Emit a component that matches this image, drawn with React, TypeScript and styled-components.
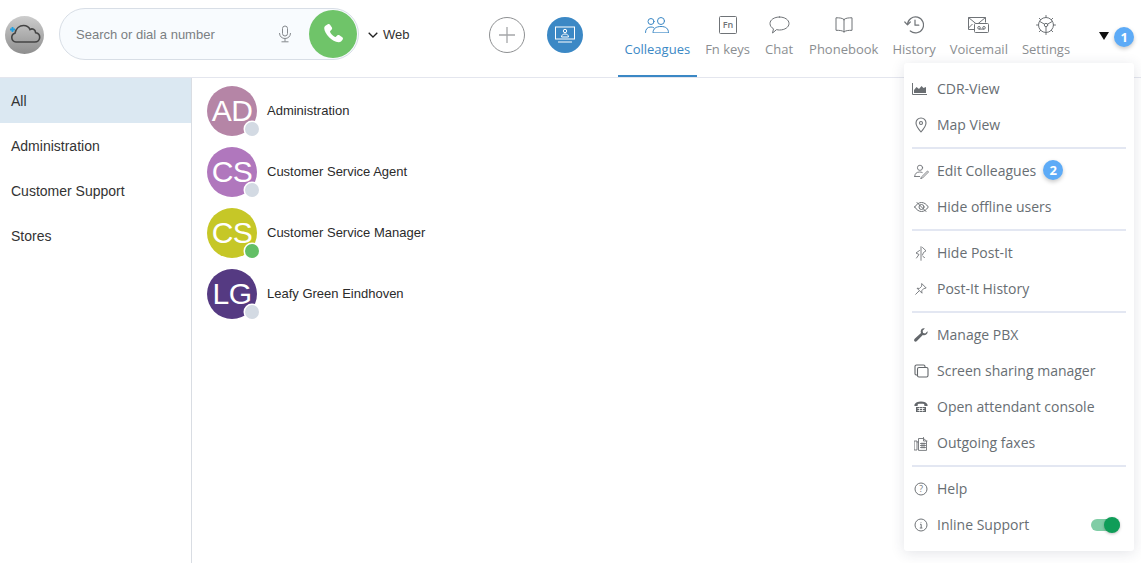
import React from 'react'
import styled, { createGlobalStyle } from 'styled-components'

const Global = createGlobalStyle`
  html, body { margin: 0; padding: 0; background: #fff; }
  body { font-family: "Liberation Sans", Arial, sans-serif; color: #333; }
  * { box-sizing: border-box; }
`

const Page = styled.div`
  position: relative;
  width: 1141px;
  height: 563px;
  overflow: hidden;
  display: flex;
  flex-direction: column;
`

const Header = styled.header`
  height: 78px;
  flex: none;
  display: flex;
  align-items: flex-start;
  border-bottom: 1px solid #e4e6ee;
`

const Logo = styled.div`
  width: 39px;
  height: 38px;
  margin: 16px 0 0 5px;
  border-radius: 50%;
  background: linear-gradient(#cdcdcd, #8e8e8e);
`

const Search = styled.div`
  width: 300px;
  height: 52px;
  margin: 8px 0 0 15px;
  padding: 0 1px 0 16px;
  display: flex;
  align-items: center;
  border: 1px solid #d8dee6;
  border-radius: 26px;
  background: #f8fbfe;
  font-size: 13px;
  color: #7b7f83;
`

const SearchText = styled.span`
  flex: 1;
`

const CallButton = styled.div`
  width: 48px;
  height: 48px;
  margin-left: 17px;
  border-radius: 50%;
  background: #6fc469;
  display: flex;
  align-items: center;
  justify-content: center;
`

const WebSwitch = styled.div`
  display: flex;
  align-items: center;
  gap: 5px;
  margin: 27px 0 0 9px;
  font-size: 13px;
  line-height: 16px;
  color: #333;
`

const RoundAction = styled.div<{ $filled?: boolean }>`
  width: 36px;
  height: 36px;
  margin: 17px 0 0 ${(p) => (p.$filled ? '22px' : '79px')};
  border-radius: 50%;
  display: flex;
  align-items: center;
  justify-content: center;
  background: ${(p) => (p.$filled ? '#3b88c5' : '#fff')};
  border: ${(p) => (p.$filled ? 'none' : '1px solid #8e9092')};
`

const Nav = styled.nav`
  display: flex;
  margin-left: 35px;
  height: 77px;
`

const Tab = styled.div<{ $active?: boolean; $gap?: number }>`
  height: 77px;
  padding: 14px 7px 0;
  margin-right: ${(p) => p.$gap ?? 0}px;
  display: flex;
  flex-direction: column;
  align-items: center;
  font-family: "Open Sans", sans-serif;
  font-size: 13px;
  line-height: 18px;
  white-space: nowrap;
  color: ${(p) => (p.$active ? '#3b88c5' : '#8b8e91')};
  border-bottom: 2px solid ${(p) => (p.$active ? '#3b88c5' : 'transparent')};
`

const TabIcon = styled.div`
  height: 26px;
  padding-bottom: 4px;
  display: flex;
  align-items: center;
  justify-content: center;
`

const Caret = styled.div`
  width: 0;
  height: 0;
  margin: 32px 0 0 22px;
  border-left: 5.5px solid transparent;
  border-right: 5.5px solid transparent;
  border-top: 8px solid #111;
`

const Badge = styled.span`
  width: 20px;
  height: 20px;
  flex: none;
  border-radius: 50%;
  background: #5dabf7;
  color: #fff;
  font-family: "Open Sans", sans-serif;
  font-size: 13px;
  font-weight: 700;
  line-height: 20px;
  text-align: center;
  box-shadow: 0 2px 4px rgba(0, 0, 0, 0.22);
`

const HeaderBadge = styled(Badge)`
  margin: 27px 0 0 5px;
`

const Body = styled.div`
  flex: 1;
  display: flex;
  min-height: 0;
`

const Sidebar = styled.aside`
  width: 192px;
  flex: none;
  border-right: 1px solid #d9dde3;
`

const Group = styled.div<{ $active?: boolean }>`
  height: 45px;
  padding-left: 11px;
  display: flex;
  align-items: center;
  font-size: 14px;
  color: #333;
  background: ${(p) => (p.$active ? '#dbe8f2' : 'transparent')};
`

const Contacts = styled.main`
  padding: 8px 0 0 15px;
  display: flex;
  flex-direction: column;
  gap: 11px;
`

const Contact = styled.div`
  display: flex;
  align-items: center;
  gap: 10px;
  font-size: 13px;
  color: #2b2b2b;
  height: 50px;
`

const ContactName = styled.span`
  margin-bottom: 2px;
`

const Avatar = styled.div<{ $color: string }>`
  position: relative;
  width: 50px;
  height: 50px;
  border-radius: 50%;
  background: ${(p) => p.$color};
  color: #fff;
  font-size: 30px;
  line-height: 50px;
  text-align: center;
  letter-spacing: -0.5px;
`

const Status = styled.span<{ $online?: boolean }>`
  position: absolute;
  right: -2px;
  bottom: 0;
  width: 14px;
  height: 14px;
  border-radius: 50%;
  background: ${(p) => (p.$online ? '#63bf66' : '#d3dae3')};
  box-shadow: 0 0 0 1.5px #fff;
`

const Menu = styled.div`
  position: absolute;
  left: 904px;
  top: 63px;
  width: 230px;
  height: 488px;
  padding: 8px 8px 7px;
  background: #fff;
  border-radius: 3px;
  box-shadow: 0 2px 14px rgba(40, 50, 80, 0.13);
`

const MenuDivider = styled.div`
  height: 2px;
  margin: 4px 0;
  background: #e3e7f2;
`

const MenuItem = styled.div`
  height: 36px;
  padding-bottom: 2px;
  display: flex;
  align-items: center;
  font-family: "Open Sans", sans-serif;
  font-size: 14px;
  color: #686e73;
  white-space: nowrap;
`

const MenuIcon = styled.div`
  width: 18px;
  height: 18px;
  margin: 2px 7px 0 0;
  display: flex;
  align-items: center;
  justify-content: center;
`

const ItemBadge = styled(Badge)`
  margin-left: 7px;
`

const Toggle = styled.div`
  position: relative;
  width: 29px;
  height: 12px;
  margin: 2px 6px 0 auto;
  border-radius: 6px;
  background: #80cda6;
`

const Knob = styled.span`
  position: absolute;
  right: 0;
  top: -2px;
  width: 16px;
  height: 16px;
  border-radius: 50%;
  background: #0f9d58;
  box-shadow: 0 1px 3px rgba(0, 0, 0, 0.25);
`

const gray = '#6f7377'

function Line({ w = 18, h = 18, color = gray, sw = 1, children }: { w?: number; h?: number; color?: string; sw?: number; children: React.ReactNode }) {
  return (
    <svg width={w} height={h} viewBox={`0 0 ${w} ${h}`} fill="none" stroke={color} strokeWidth={sw} strokeLinecap="round" strokeLinejoin="round">
      {children}
    </svg>
  )
}

const groups = ['All', 'Administration', 'Customer Support', 'Stores']

const contacts = [
  { initials: 'AD', name: 'Administration', color: '#b585a6' },
  { initials: 'CS', name: 'Customer Service Agent', color: '#b077bd' },
  { initials: 'CS', name: 'Customer Service Manager', color: '#c6c727', online: true },
  { initials: 'LG', name: 'Leafy Green Eindhoven', color: '#553a82' },
]

const tabs = [
  {
    label: 'Colleagues',
    active: true,
    gap: 1,
    icon: (
      <Line w={24} h={16} color="#3b88c5">
        <circle cx="6" cy="4.500" r="3" />
        <circle cx="16" cy="4" r="3.500" />
        <path d="M0.500 15.500c0-3.500 2-5.500 5.500-5.500 1.200 0 2.200.3 3 .9M8 15.500c0-3.800 3-6 8-6s7.500 2.200 7.500 6z" />
      </Line>
    ),
  },
  {
    label: 'Fn keys',
    gap: 1,
    icon: (
      <svg width="18" height="18" viewBox="0 0 18 18">
        <rect x="0.500" y="0.500" width="17" height="17" rx="1" fill="none" stroke={gray} />
        <text x="9" y="12" textAnchor="middle" fontFamily="Open Sans" fontSize="9" fontWeight="600" fill={gray}>Fn</text>
      </svg>
    ),
  },
  {
    label: 'Chat',
    gap: 2,
    icon: (
      <Line w={21} h={18}>
        <path d="M10.500 1c5.300 0 9.500 2.800 9.500 6.500S15.800 14 10.500 14c-1 0-2-.1-2.900-.4L3.500 17l1-4.200C2.300 11.600 1 9.700 1 7.500 1 3.800 5.200 1 10.500 1z" />
      </Line>
    ),
  },
  {
    label: 'Phonebook',
    icon: (
      <Line w={18} h={16}>
        <path d="M9 2.500C7.500 1 4.500.8 1 .8v12.500c3.500 0 6.500.2 8 1.700 1.500-1.500 4.500-1.700 8-1.700V.8C13.500.8 10.500 1 9 2.500zM9 2.500V15" />
      </Line>
    ),
  },
  {
    label: 'History',
    icon: (
      <Line w={20} h={18} sw={1.2}>
        <path d="M3.500 8.500a8 8 0 1 1 2.800 6.500" />
        <path d="M0.800 6l2.700 2.800L6.300 6M11 4v5.200h3.800" />
      </Line>
    ),
  },
  {
    label: 'Voicemail',
    icon: (
      <svg width="21" height="16" viewBox="0 0 21 16" fill="none" stroke={gray}>
        <path d="M6 12.500H0.500V0.500h17v5M0.500 0.500L9 7.500l8.500-7M0.500 11l4-4" />
        <rect x="6.500" y="6.500" width="14" height="9" rx="1" fill="#fff" />
        <circle cx="11" cy="10.800" r="1.300" />
        <circle cx="16" cy="10.800" r="1.300" />
        <path d="M11 12.100h5" />
      </svg>
    ),
  },
  {
    label: 'Settings',
    icon: (
      <Line w={20} h={20}>
        <circle cx="10" cy="10" r="7.500" />
        <circle cx="10" cy="10" r="1.700" />
        <path d="M10 0.500v2M10 17.500v2M0.500 10h2M17.500 10h2M3.300 3.300l1.400 1.400M15.300 15.300l1.400 1.400M3.300 16.700l1.400-1.400M15.300 4.700l1.400-1.400M11.500 9.200l5-2.900M8.500 9.200l-5-2.900M10 11.700v5.800" />
      </Line>
    ),
  },
]

const menuGroups = [
  [
    {
      label: 'CDR-View',
      icon: (
        <svg width="18" height="12" viewBox="0 0 18 12">
          <path d="M0.500 0v11.500H15" fill="none" stroke={gray} />
          <path d="M2 10V7l2.500-3 2.500 2 2.500-3 2 2 2.500-1v6z" fill="#6a6e72" />
        </svg>
      ),
    },
    {
      label: 'Map View',
      icon: (
        <Line w={12} h={16} sw={1.1}>
          <path d="M6 15C3 11.500 1 9 1 6a5 5 0 0 1 10 0C11 9 9 11.500 6 15z" />
          <circle cx="6" cy="6" r="1.500" />
        </Line>
      ),
    },
  ],
  [
    {
      label: 'Edit Colleagues',
      badge: '2',
      icon: (
        <Line w={15} h={15} sw={0.9}>
          <circle cx="6" cy="3.800" r="2.600" />
          <path d="M0.700 12.500c0-3 2-4.500 5-4.500 1 0 1.800.2 2.500.5M0.700 12.500h5M7.500 13l6-6 1 1-6 6-1.500.5z" />
        </Line>
      ),
    },
    {
      label: 'Hide offline users',
      icon: (
        <Line w={15} h={12} sw={1}>
          <path d="M0.700 6c2-3 4.300-4.500 6.800-4.500S12.300 3 14.300 6c-2 3-4.300 4.500-6.800 4.500S2.700 9 .7 6z" />
          <circle cx="7.500" cy="6" r="2.500" />
          <path d="M3 1.500l9 9" />
        </Line>
      ),
    },
  ],
  [
    {
      label: 'Hide Post-It',
      icon: (
        <Line w={12} h={15} sw={0.9}>
          <path d="M6 0.700v13.600M7.500 1.500L11 4.800 8.500 6.500 7.500 9M4.500 4.500L1 7l3 1.500-2.500 3.500M8 10.500l1.500 1" />
        </Line>
      ),
    },
    {
      label: 'Post-It History',
      icon: (
        <Line w={12} h={12} sw={0.9}>
          <path d="M7 .8l4.200 4.200-2.500.6-2 2.200.3 2.400-5-5 2.400.3 2-2zM3.800 8.200L.7 11.300" />
        </Line>
      ),
    },
  ],
  [
    {
      label: 'Manage PBX',
      icon: (
        <svg width="14" height="14" viewBox="0 0 14 14">
          <path d="M13.500 3.200l-2.300 2.200-2.100-.5-.5-2.100L10.800.5C8.800-.1 6.900 1.200 6.700 3.200c-.1.700.1 1.300.3 1.800L.7 10.800c-.8.800-.8 1.700-.2 2.400.7.700 1.600.6 2.400-.2L8.800 7c2.400.8 5.500-1 4.700-3.800z" fill="#63676b" />
        </svg>
      ),
    },
    {
      label: 'Screen sharing manager',
      icon: (
        <Line w={15} h={14} sw={1.1} color="#63676b">
          <path d="M3.500 11H2.200A1.200 1.200 0 0 1 1 9.800V2.500A1.500 1.500 0 0 1 2.500 1h7A1.500 1.500 0 0 1 11 2.500V3" />
          <rect x="3.500" y="3.500" width="10.500" height="9.500" rx="1.500" />
        </Line>
      ),
    },
    {
      label: 'Open attendant console',
      icon: (
        <svg width="14" height="12" viewBox="0 0 14 12">
          <path d="M0.300 4C1 1.500 4 .5 7 .5s6 1 6.700 3.500c.1.700-.3 1-1 1h-1.500c-.6 0-1-.3-1-1V3c-1.500-.5-4.900-.5-6.400 0v1c0 .7-.4 1-1 1H1.300C.6 5 .2 4.700.3 4z" fill="#63676b" />
          <path d="M2 6h10v5H2z" fill="#63676b" />
          <path d="M3.500 7.500h7M3.500 9.500h7M5.500 6.500v4M8.500 6.500v4" stroke="#fff" strokeWidth="0.800" />
        </svg>
      ),
    },
    {
      label: 'Outgoing faxes',
      icon: (
        <Line w={14} h={15} sw={0.9}>
          <rect x="0.500" y="5" width="2.500" height="9" />
          <path d="M3 6h1.500M4.500 14V2.500h5l3 2.500V14zM9.500 1.500V5H13" />
          <path d="M6.500 7.500h5M6.500 9.500h5M6.500 11.500h5M8 7v5M10 7v5" />
        </Line>
      ),
    },
  ],
  [
    {
      label: 'Help',
      icon: (
        <svg width="14" height="14" viewBox="0 0 14 14" fill="none" stroke={gray}>
          <circle cx="7" cy="7" r="6" />
          <text x="7" y="10" textAnchor="middle" fontFamily="Open Sans" fontSize="8.500" fill={gray} stroke="none">?</text>
        </svg>
      ),
    },
    {
      label: 'Inline Support',
      toggle: true,
      icon: (
        <svg width="14" height="14" viewBox="0 0 14 14" fill="none" stroke={gray}>
          <circle cx="7" cy="7" r="6" />
          <path d="M6 6.300h1.200v3.700M5.800 10h2.600M7 4v.6" />
        </svg>
      ),
    },
  ],
]

export default function App() {
  return (
    <Page>
      <Global />
      <Header>
        <Logo>
          <svg width="39" height="38" viewBox="0 0 39 38" fill="none">
            <path d="M11 26a4.500 4.500 0 0 1-1-8.800C11 12.500 14.500 9.500 18.500 9.500c3 0 5.500 1.500 6.500 4 1-.6 2.500-.8 3.500-.2 1.500.7 2 2 2.200 3.500 2.500.4 4 2 4 4.500 0 2.700-2 4.700-5 4.700z" stroke="#444" strokeWidth="1.600" />
            <path d="M5 13.500h5M7.500 11v5" stroke="#1f9fe0" strokeWidth="1.800" />
          </svg>
        </Logo>
        <Search>
          <SearchText>Search or dial a number</SearchText>
          <svg width="14" height="18" viewBox="0 0 14 18" fill="none" stroke="#85898d">
            <rect x="4.500" y="1" width="5" height="10" rx="2.500" />
            <path d="M1.500 8c0 3.500 2.500 5.500 5.500 5.500s5.500-2 5.500-5.500M7 13.500v3M3.500 16.800h7" />
          </svg>
          <CallButton>
            <svg width="24" height="24" viewBox="0 0 24 24">
              <path d="M6.800 2.200c.7-.5 1.600-.3 2.100.4l2 3c.4.600.3 1.400-.2 1.900L9.300 9c-.3.300-.3.600-.2.900.5 1.100 1.100 2 1.900 2.900.9.900 1.900 1.700 3.100 2.200.3.100.6.100.8-.2l1.600-1.500c.5-.5 1.300-.5 1.900-.1l2.900 2.100c.7.500.9 1.400.4 2.100-.9 1.400-2.400 2.900-4 2.800-3.600-.2-6.700-2-9.400-4.700C5.100 12 3.300 8.900 3.200 5.900c0-1.500 2.100-2.900 3.600-3.700z" fill="#fff" />
            </svg>
          </CallButton>
        </Search>
        <WebSwitch>
          <svg width="10" height="6" viewBox="0 0 10 6" fill="none" stroke="#222" strokeWidth="1.300">
            <path d="M0.700 0.700L5 5l4.300-4.300" />
          </svg>
          Web
        </WebSwitch>
        <RoundAction>
          <svg width="16" height="16" viewBox="0 0 16 16" stroke="#a5a7a9" strokeWidth="1.300">
            <path d="M8 0v16M0 8h16" />
          </svg>
        </RoundAction>
        <RoundAction $filled>
          <svg width="20" height="18" viewBox="0 0 20 18" fill="none" stroke="#fff">
            <rect x="0.500" y="1" width="19" height="12" />
            <circle cx="10" cy="5" r="1.700" />
            <path d="M6.500 11c0-2 1.500-3 3.500-3s3.500 1 3.500 3zM3 16h14" />
          </svg>
        </RoundAction>
        <Nav>
          {tabs.map((t) => (
            <Tab key={t.label} $active={t.active} $gap={t.gap}>
              <TabIcon>{t.icon}</TabIcon>
              {t.label}
            </Tab>
          ))}
        </Nav>
        <Caret />
        <HeaderBadge>1</HeaderBadge>
      </Header>
      <Body>
        <Sidebar>
          {groups.map((g, i) => (
            <Group key={g} $active={i === 0}>
              {g}
            </Group>
          ))}
        </Sidebar>
        <Contacts>
          {contacts.map((c) => (
            <Contact key={c.name}>
              <Avatar $color={c.color}>
                {c.initials}
                <Status $online={c.online} />
              </Avatar>
              <ContactName>{c.name}</ContactName>
            </Contact>
          ))}
        </Contacts>
      </Body>
      <Menu>
        {menuGroups.map((items, i) => (
          <React.Fragment key={i}>
            {i > 0 && <MenuDivider />}
            {items.map((item: any) => (
              <MenuItem key={item.label}>
                <MenuIcon>{item.icon}</MenuIcon>
                {item.label}
                {item.badge && <ItemBadge>{item.badge}</ItemBadge>}
                {item.toggle && (
                  <Toggle>
                    <Knob />
                  </Toggle>
                )}
              </MenuItem>
            ))}
          </React.Fragment>
        ))}
      </Menu>
    </Page>
  )
}
